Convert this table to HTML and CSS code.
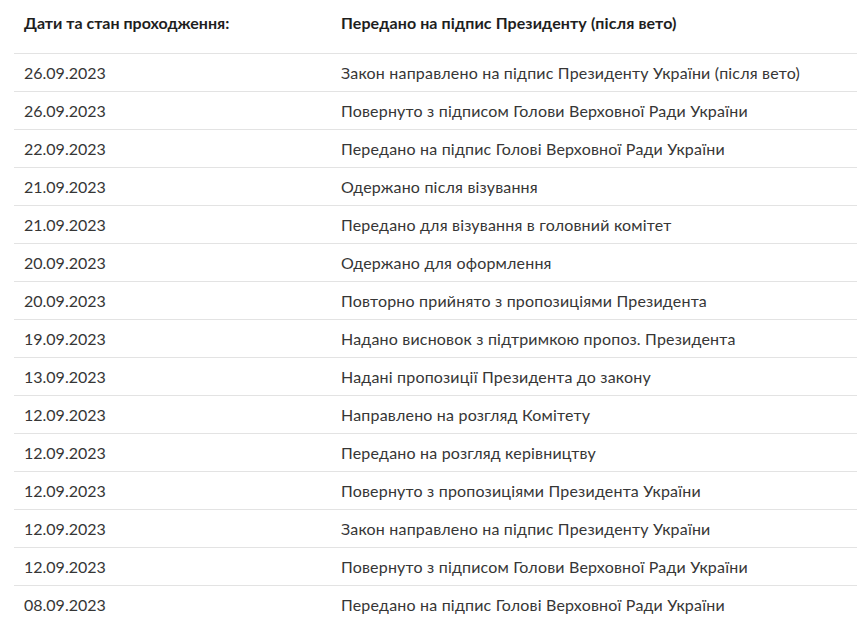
FILE: index.html
```html
<!DOCTYPE html>
<html lang="uk">
<head>
<meta charset="utf-8">
<link rel="stylesheet" href="styles.css">
</head>
<body>
<div class="table">
  <div class="row head"><div class="c1">Дати та стан проходження:</div><div class="c2">Передано на підпис Президенту (після вето)</div></div>
  <div class="row"><div class="c1">26.09.2023</div><div class="c2">Закон направлено на підпис Президенту України (після вето)</div></div>
  <div class="row"><div class="c1">26.09.2023</div><div class="c2">Повернуто з підписом Голови Верховної Ради України</div></div>
  <div class="row"><div class="c1">22.09.2023</div><div class="c2">Передано на підпис Голові Верховної Ради України</div></div>
  <div class="row"><div class="c1">21.09.2023</div><div class="c2">Одержано після візування</div></div>
  <div class="row"><div class="c1">21.09.2023</div><div class="c2">Передано для візування в головний комітет</div></div>
  <div class="row"><div class="c1">20.09.2023</div><div class="c2">Одержано для оформлення</div></div>
  <div class="row"><div class="c1">20.09.2023</div><div class="c2">Повторно прийнято з пропозиціями Президента</div></div>
  <div class="row"><div class="c1">19.09.2023</div><div class="c2">Надано висновок з підтримкою пропоз. Президента</div></div>
  <div class="row"><div class="c1">13.09.2023</div><div class="c2">Надані пропозиції Президента до закону</div></div>
  <div class="row"><div class="c1">12.09.2023</div><div class="c2">Направлено на розгляд Комітету</div></div>
  <div class="row"><div class="c1">12.09.2023</div><div class="c2">Передано на розгляд керівництву</div></div>
  <div class="row"><div class="c1">12.09.2023</div><div class="c2">Повернуто з пропозиціями Президента України</div></div>
  <div class="row"><div class="c1">12.09.2023</div><div class="c2">Закон направлено на підпис Президенту України</div></div>
  <div class="row"><div class="c1">12.09.2023</div><div class="c2">Повернуто з підписом Голови Верховної Ради України</div></div>
  <div class="row"><div class="c1">08.09.2023</div><div class="c2">Передано на підпис Голові Верховної Ради України</div></div>
</div>
</body>
</html>
```
FILE: styles.css
```css
html, body {
  margin: 0;
  padding: 0;
  background: #fff;
}
body {
  font-family: Lato, "Noto Sans", sans-serif;
  font-size: 16px;
  color: #363636;
}
.table {
  margin-left: 14px;
}
.row {
  display: flex;
  height: 38px;
  align-items: center;
  border-top: 1px solid #e3e3e3;
  box-sizing: border-box;
}
.row.head {
  height: 53px;
  border-top: none;
  font-weight: 700;
  color: #1e1e1e;
  padding-bottom: 8px;
}
.c1 {
  width: 317px;
  padding-left: 10px;
}
.c2 {
  flex: 1;
  letter-spacing: 0.19px;
}
.head .c2 {
  letter-spacing: 0.1px;
}
```
